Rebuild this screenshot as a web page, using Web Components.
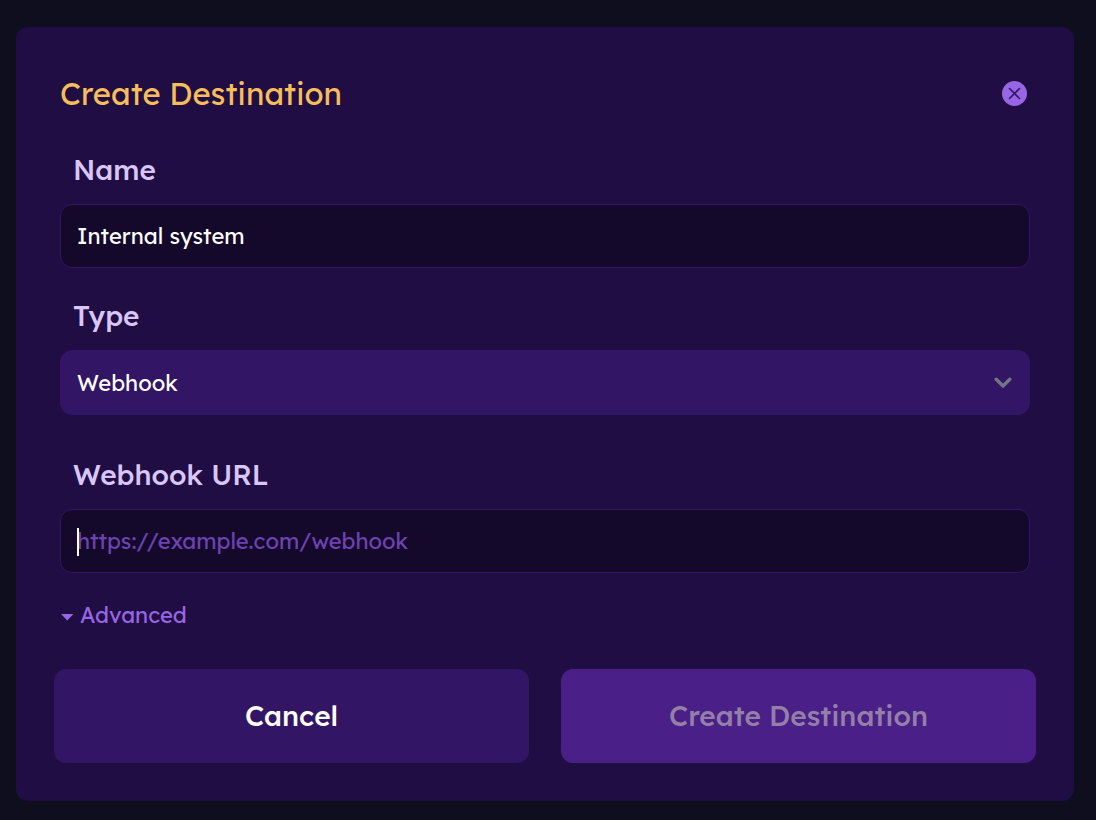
<!DOCTYPE html>
<html lang="en">
<head>
<meta charset="utf-8">
<meta name="viewport" content="width=device-width, initial-scale=1">
<title>Create Destination</title>
<style>
  :root {
    --page: #0f0e1f;
    --panel: #200d43;
    --well: #15092b;
    --well-border: #321566;
    --raised: #321564;
    --primary: #4a1f87;
    --accent: #9866e4;
    --title: #f6bd5b;
    --label: #d9c6f9;
    --placeholder: #6d43b3;
    --disabled-text: #937fa8;
  }
  body {
    margin: 0;
    padding: 27px 22px 19px 16px;
    background: var(--page);
    color: #fff;
    font-family: Lexend, Inter, "Noto Sans", sans-serif;
  }
</style>
</head>
<body>
<destination-dialog heading="Create Destination">
  <text-field label="Name" value="Internal system"></text-field>
  <select-field label="Type" options="Webhook"></select-field>
  <text-field class="spaced" label="Webhook URL" placeholder="https://example.com/webhook" active></text-field>
  <disclosure-toggle>Advanced</disclosure-toggle>
  <action-button slot="actions">Cancel</action-button>
  <action-button slot="actions" variant="primary" disabled>Create Destination</action-button>
</destination-dialog>

<script>
  const fieldStyles = `
    :host { display: flex; flex-direction: column; gap: 14px; }
    label { padding: 0 13px; color: var(--label); font-size: 28px; line-height: 40px; font-weight: 500; }
    .control { position: relative; display: grid; }
    input, select {
      box-sizing: border-box; width: 100%; margin: 0; padding: 0 16px;
      border: 1px solid var(--well-border); border-radius: 12px; outline: 0;
      background: var(--well); color: #fff; font: inherit; font-size: 22px; line-height: 28px;
    }
  `;

  class BaseElement extends HTMLElement {
    constructor() {
      super();
      this.attachShadow({ mode: 'open' });
    }
    connectedCallback() {
      this.shadowRoot.innerHTML = this.render();
    }
    attr(name) { return this.getAttribute(name) || ''; }
  }

  customElements.define('destination-dialog', class extends BaseElement {
    render() {
      return `
        <style>
          :host { display: block; }
          section { background: var(--panel); border-radius: 12px; padding: 38px; }
          header, .fields { margin: 0 6px; }
          header { display: flex; align-items: center; justify-content: space-between; height: 57px; margin-bottom: 28px; padding-right: 3px; }
          h1 { margin: 0; color: var(--title); font-size: 31px; line-height: 40px; font-weight: 400; }
          .fields { display: flex; flex-direction: column; gap: 28px; }
          ::slotted(.spaced) { margin-top: 12px; }
          footer { display: grid; grid-template-columns: 1fr 1fr; gap: 32px; margin-top: 40px; }
        </style>
        <section role="dialog" aria-labelledby="heading">
          <header><h1 id="heading">${this.attr('heading')}</h1><close-button></close-button></header>
          <div class="fields"><slot></slot></div>
          <footer><slot name="actions"></slot></footer>
        </section>`;
    }
  });

  customElements.define('close-button', class extends BaseElement {
    render() {
      return `
        <style>
          :host { display: block; }
          button { display: block; padding: 0; border: 0; border-radius: 50%; background: none; cursor: pointer; }
          svg { display: block; }
        </style>
        <button type="button" aria-label="Close">
          <svg width="25" height="25" viewBox="0 0 25 25" aria-hidden="true">
            <circle cx="12.5" cy="12.5" r="12.5" fill="var(--accent)"/>
            <path d="M7.5 7.5l10 10M17.5 7.5l-10 10" stroke="var(--raised)" stroke-width="1.6" stroke-linecap="round"/>
          </svg>
        </button>`;
    }
  });

  customElements.define('text-field', class extends BaseElement {
    render() {
      return `
        <style>
          ${fieldStyles}
          input { height: 64px; }
          input::placeholder { color: var(--placeholder); opacity: 1; }
          :host([active]) input { caret-color: transparent; }
          :host([active]) .control::after {
            content: ""; position: absolute; left: 17px; top: 19px; height: 28px; width: 2px; background: #fff;
          }
        </style>
        <label for="input">${this.attr('label')}</label>
        <div class="control">
          <input id="input" type="text" value="${this.attr('value')}" placeholder="${this.attr('placeholder')}">
        </div>`;
    }
  });

  customElements.define('select-field', class extends BaseElement {
    render() {
      const options = this.attr('options').split(',').map(o => `<option>${o}</option>`).join('');
      return `
        <style>
          ${fieldStyles}
          select { height: 65px; appearance: none; background: var(--raised); border-color: var(--raised); }
          svg { position: absolute; right: 18px; top: 0; height: 100%; pointer-events: none; }
        </style>
        <label for="select">${this.attr('label')}</label>
        <div class="control">
          <select id="select">${options}</select>
          <svg width="18" viewBox="0 0 18 12" fill="none" aria-hidden="true">
            <path d="M2.2 2.7L9 9.5l6.800-6.800" stroke="#747487" stroke-width="3.400" stroke-linecap="round" stroke-linejoin="round"/>
          </svg>
        </div>`;
    }
  });

  customElements.define('disclosure-toggle', class extends BaseElement {
    render() {
      return `
        <style>
          :host { display: block; }
          button {
            display: flex; align-items: center; gap: 6px; padding: 0; border: 0; background: none;
            color: var(--accent); font: inherit; font-size: 22px; line-height: 28px; cursor: pointer;
          }
        </style>
        <button type="button" aria-expanded="false">
          <svg width="14" height="28" viewBox="0 0 14 28" aria-hidden="true"><path d="M1 13h12.500l-6.250 6.500z" fill="currentColor"/></svg>
          <slot></slot>
        </button>`;
    }
  });

  customElements.define('action-button', class extends BaseElement {
    render() {
      return `
        <style>
          :host { display: grid; }
          button {
            height: 94px; padding: 0 24px; border: 0; border-radius: 12px;
            background: var(--raised); color: #fff; font: inherit; font-size: 28px; line-height: 40px; font-weight: 500; cursor: pointer;
          }
          :host([variant="primary"]) button { background: var(--primary); }
          button:disabled { color: var(--disabled-text); cursor: default; }
        </style>
        <button type="button" ${this.hasAttribute('disabled') ? 'disabled' : ''}><slot></slot></button>`;
    }
  });
</script>
</body>
</html>
